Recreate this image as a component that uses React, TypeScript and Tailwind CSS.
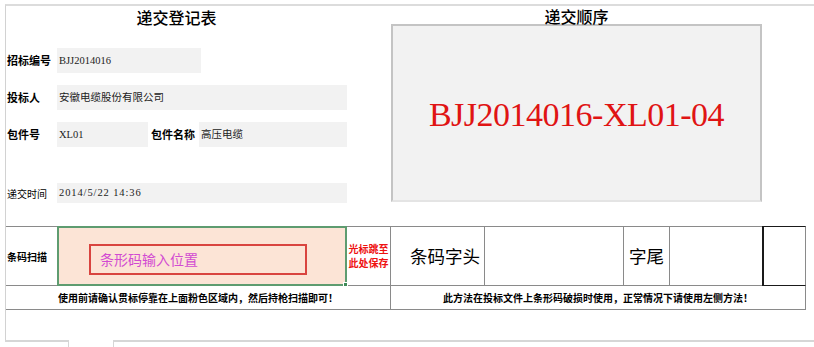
import React from "react";

const cjk = "font-['Noto_Sans_CJK_SC',sans-serif]";
const serif = "font-['Liberation_Serif','Noto_Sans_CJK_SC',serif]";

function Field({ w, h = 25, children, extra = "" }: { w: number; h?: number; children?: React.ReactNode; extra?: string }) {
  return (
    <div
      className={`bg-[#f2f2f2] flex items-center pl-[2px] text-[10.5px] text-[#222] ${serif} ${extra}`}
      style={{ width: w, height: h }}
    >
      {children}
    </div>
  );
}

export default function App() {
  return (
    <div className={`w-[814px] h-[347px] bg-white overflow-hidden ${cjk} text-black`}>
      <div className="h-[4px]" />
      <div className="ml-[5px] h-[336px] border-t-2 border-l border-t-[#dcdcdc] border-l-[#d2d2d2]">
        {/* top section */}
        <div className="flex h-[220px]">
          {/* left form */}
          <div className="w-[384px]">
            <div className="w-[341px] pt-[1px] text-center text-[16px] leading-[20px] font-medium">递交登记表</div>
            <div className="mt-[21px] flex items-center h-[25px]">
              <div className="w-[51px] pl-[1px] text-[11px] font-bold">招标编号</div>
              <Field w={144}>BJJ2014016</Field>
            </div>
            <div className="mt-[12px] flex items-center h-[25px]">
              <div className="w-[51px] pl-[1px] text-[11px] font-bold">投标人</div>
              <Field w={290}>安徽电缆股份有限公司</Field>
            </div>
            <div className="mt-[12px] flex items-center h-[25px]">
              <div className="w-[51px] pl-[1px] text-[11px] font-bold">包件号</div>
              <Field w={91}>XL01</Field>
              <div className="w-[51px] pl-[3px] text-[11px] font-bold">包件名称</div>
              <Field w={148}>高压电缆</Field>
            </div>
            <div className="mt-[36px] flex items-center h-[20px]">
              <div className="w-[51px] pl-[1px] text-[10px]">递交时间</div>
              <Field w={290} h={20} extra="tracking-[0.9px]">2014/5/22 14:36</Field>
            </div>
          </div>
          {/* right order */}
          <div className="flex-1">
            <div className="ml-[1px] w-[371px] h-[18px] text-center text-[16px] leading-[20px] font-medium">递交顺序</div>
            <div className="ml-[1px] w-[371px] h-[178px] bg-[#f2f2f2] border-2 border-[#c4c4c4] border-b-[#e4e4e4] flex items-center justify-center pt-[3px]">
              <span className="font-['Liberation_Serif',serif] text-[34px] tracking-[-0.5px] text-[#e01414] leading-none">
                BJJ2014016-XL01-04
              </span>
            </div>
          </div>
        </div>

        {/* table row 1 */}
        <div className="flex h-[60px]">
          <div className="w-[51px] border-t border-b border-[#8a8a8a] flex items-center pl-[1px] text-[10px] font-bold">
            条码扫描
          </div>
          <div className="relative w-[290px] bg-[#fce4d6] border-2 border-[#5e9c70] pt-[16px] pl-[30px]">
            <div className="w-[218px] h-[31px] border-2 border-[#d9443f] flex items-center pl-[9px] text-[14px] text-[#d24bd2]">
              条形码输入位置
            </div>
            <div className="absolute -right-[3px] -bottom-[3px] w-[5px] h-[5px] bg-[#3f8a57] border border-white" />
          </div>
          <div className="w-[43px] border-t border-b border-[#8a8a8a] flex flex-col items-center justify-center text-[10px] leading-[14px] font-bold text-[#ee1111]">
            <span>光标跳至</span>
            <span>此处保存</span>
          </div>
          <div className="w-[94px] border-t border-b border-l border-[#8a8a8a] flex items-center pl-[19px] text-[17.5px]">
            条码字头
          </div>
          <div className="w-[139px] border-t border-b border-l border-[#8a8a8a]" />
          <div className="w-[46px] border-t border-b border-l border-[#8a8a8a] flex items-center justify-center text-[17.5px]">
            字尾
          </div>
          <div className="w-[93px] border-t border-b border-l border-[#8a8a8a]" />
          <div className="w-[44px] border-t border-b border-l-2 border-r border-[#1a1a1a] border-r-[#8a8a8a]" />
        </div>

        {/* table row 2 */}
        <div className="flex h-[24px]">
          <div className="w-[384px] border-b border-[#8a8a8a] flex items-center justify-center text-[10px] font-bold">
            使用前请确认贯标停靠在上面粉色区域内，然后持枪扫描即可！
          </div>
          <div className="w-[416px] border-b border-l border-r border-[#8a8a8a] flex items-center justify-center text-[10px] font-bold">
            此方法在投标文件上条形码破损时使用，正常情况下请使用左侧方法！
          </div>
        </div>
      </div>

      {/* sheet tabs */}
      <div className="flex h-[7px]">
        <div className="ml-[5px] w-[64px] border-t-2 border-r border-[#d6d6d6]" />
        <div className="ml-[44px] flex-1 border-t-2 border-l border-[#d6d6d6]" />
      </div>
    </div>
  );
}
